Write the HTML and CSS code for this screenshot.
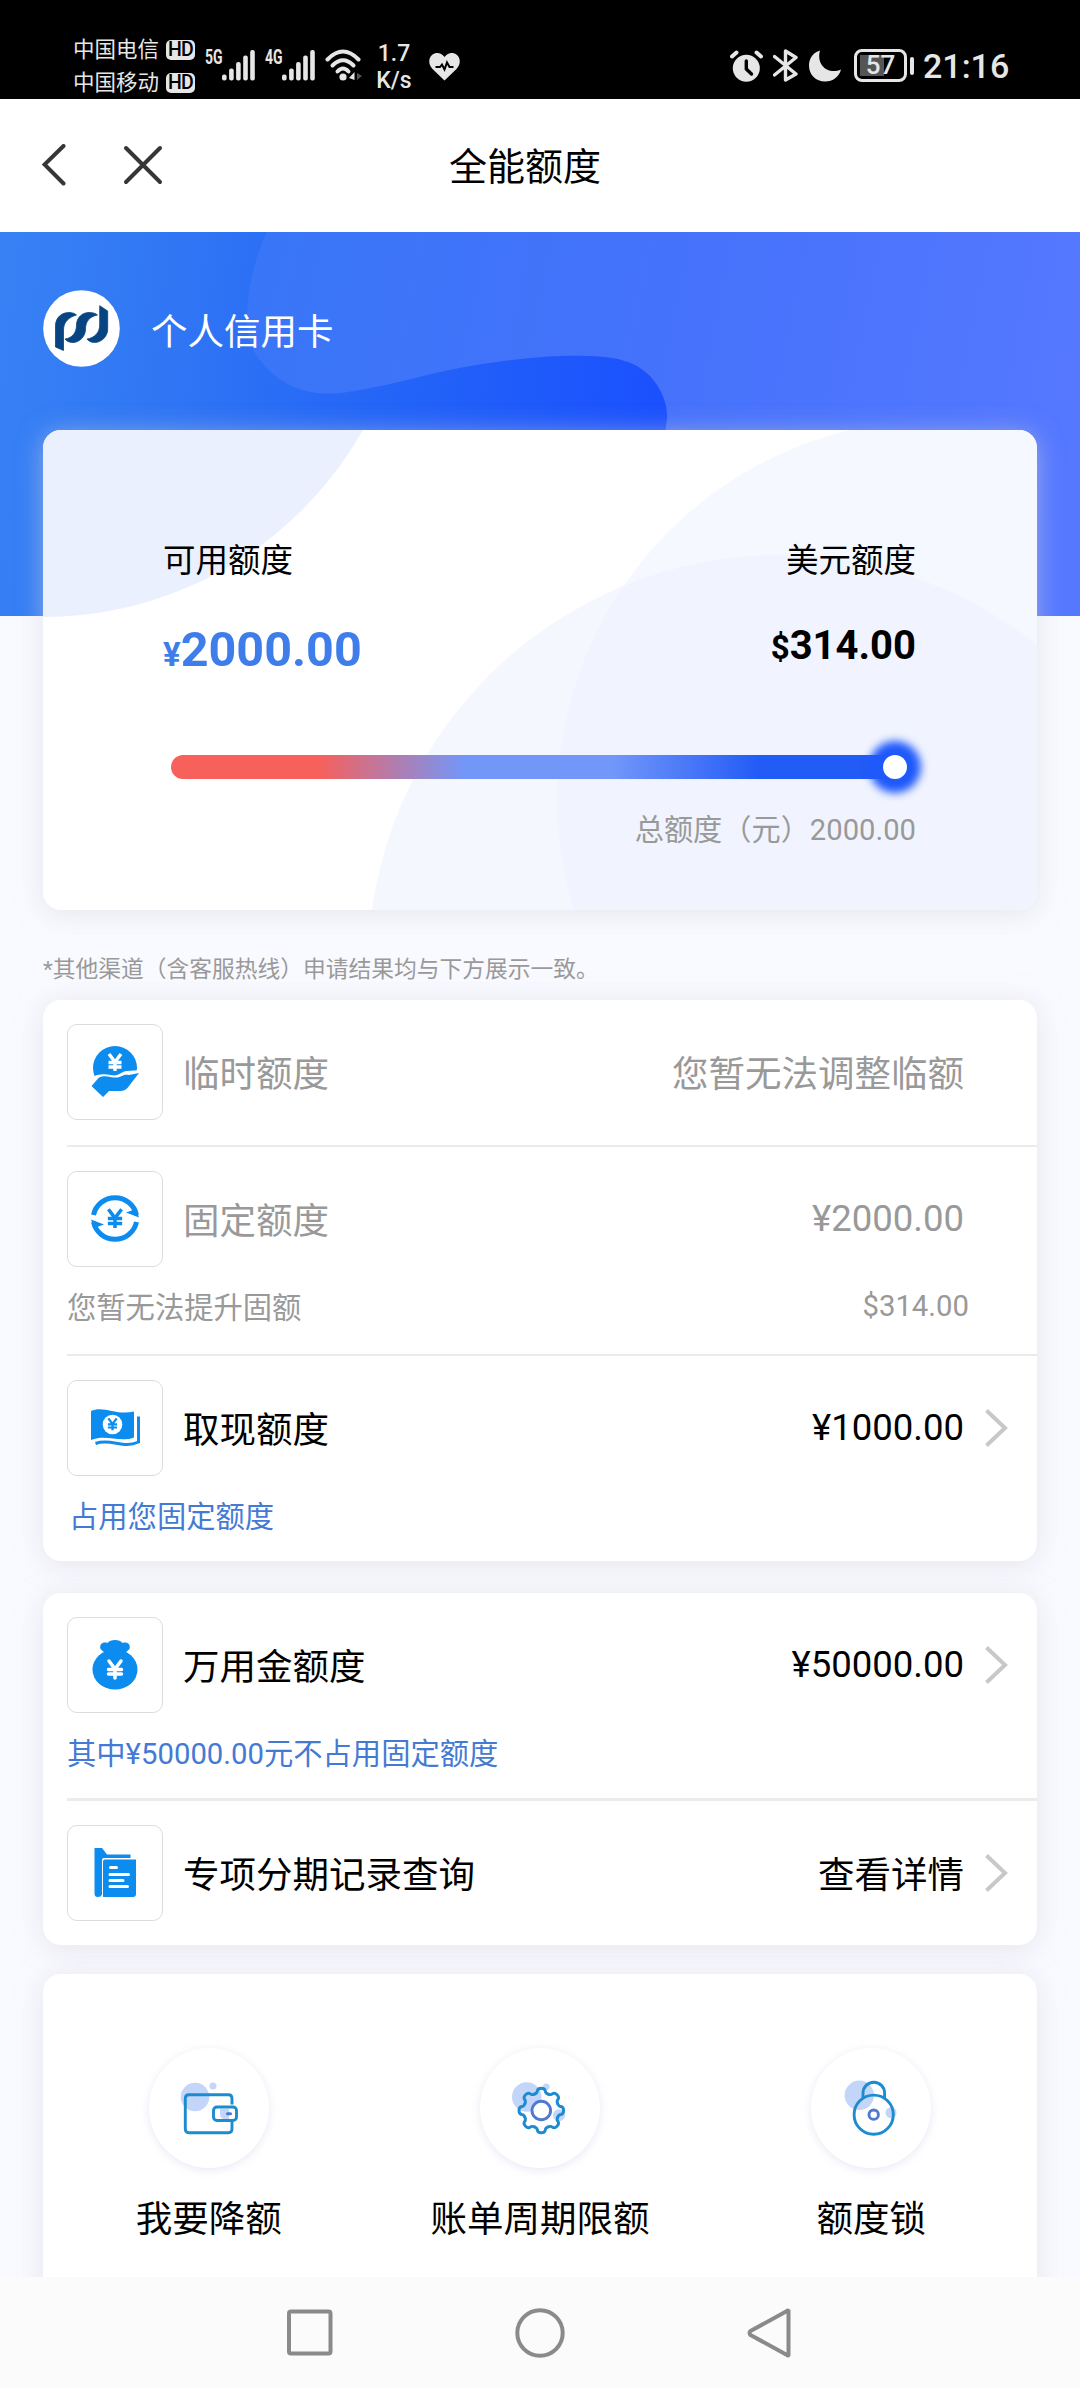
FILE: index.html
```html
<!DOCTYPE html>
<html lang="zh-CN">
<head>
<meta charset="utf-8">
<title>全能额度</title>
<link rel="stylesheet" href="styles.css">
</head>
<body>
<svg class="defs" width="0" height="0" aria-hidden="true">
  <defs>
    <g id="bars">
      <rect x="0" y="24.5" width="4.6" height="6" rx="2"/>
      <rect x="7.1" y="18.5" width="4.6" height="12" rx="2"/>
      <rect x="14.1" y="12" width="4.6" height="18.5" rx="2"/>
      <rect x="21.2" y="5.5" width="4.6" height="25" rx="2"/>
      <rect x="28.2" y="0" width="4.6" height="30.5" rx="2"/>
    </g>
    <path id="yen" d="M-6-8 L0 0 L6-8 M0 0 V9 M-6.5 0.5 H6.5 M-6.5 5 H6.5"/>
    <path id="tooth" d="M-6.8-16.4C-4.9-17.2-3.9-18-4-19.5Q-3.6-22.3 0-22.3Q3.6-22.3 4-19.5C3.9-18 4.9-17.2 6.8-16.4"/>
  </defs>
</svg>

<header class="status">
  <div class="carriers">
    <div class="carrier"><span>中国电信</span><b class="hd">HD</b></div>
    <div class="carrier"><span>中国移动</span><b class="hd">HD</b></div>
  </div>
  <div class="signal signal-5g"><span class="net">5G</span><svg width="33" height="31"><use href="#bars"/></svg></div>
  <div class="signal signal-4g"><span class="net">4G</span><svg width="33" height="31"><use href="#bars"/></svg></div>
  <svg class="wifi" width="38" height="33" viewBox="0 0 38 33">
    <g fill="none" stroke="#e6e6e6" stroke-width="4" stroke-linecap="round">
      <path d="M2.500 10.500Q18 -5.500 33.500 10.500"/><path d="M7.500 16.500Q18 6 28.500 16.500"/><path d="M12.500 22.500Q18 16.500 23.500 22.500"/>
    </g>
    <circle cx="18" cy="28" r="3.600" fill="#e6e6e6"/>
    <path d="M24 29L29.500 23V31" fill="#e6e6e6"/><path d="M32 24V31L37 27Z" fill="#555"/>
  </svg>
  <div class="speed"><span>1.7</span><span>K/s</span></div>
  <svg class="heart" width="31" height="28" viewBox="0 0 31 28">
    <path d="M15.500 27.500L3.500 16C-1 11-0.500 5 3 2C7-1 12-.5 15.500 4C19-.5 24-1 28 2C31.500 5 32 11 27.500 16Z" fill="#e6e6e6"/>
    <path d="M6.500 14H11L13 11.500L15.500 16.500L18 9.500L20.500 14H24.500" fill="none" stroke="#000" stroke-width="2"/>
  </svg>
  <svg class="alarm" width="33" height="32" viewBox="0 0 33 32">
    <circle cx="16.300" cy="18.300" r="13.500" fill="#e6e6e6"/>
    <path d="M2 6.500L6.500 2.500M31 6.500L26.500 2.500" stroke="#e6e6e6" stroke-width="4" stroke-linecap="round"/>
    <path d="M16.300 11V19L21.500 24" fill="none" stroke="#000" stroke-width="3.400" stroke-linecap="round" stroke-linejoin="round"/>
  </svg>
  <svg class="bluetooth" width="25" height="33" viewBox="0 0 25 33">
    <path d="M1.500 7.500L23 25L12.500 31V2L23 8.500L1.500 26" fill="none" stroke="#e6e6e6" stroke-width="3.400" stroke-linejoin="round" stroke-linecap="round"/>
  </svg>
  <svg class="moon" width="33" height="32" viewBox="0 0 33 32">
    <path d="M11 .5C2 3 0 11 0 15.500C0 25 7 31.500 16 31.500C24 31.500 30 27 32 19.500C19 25 7 15 11 .5Z" fill="#e6e6e6"/>
  </svg>
  <div class="battery"><span class="level">57</span></div>
  <i class="battery-nub"></i>
  <time class="clock">21:16</time>
</header>

<nav class="titlebar">
  <svg width="24" height="42" viewBox="0 0 24 42"><path d="M21.500 2L2.500 20.500L21.500 39.500" fill="none" stroke="#363636" stroke-width="4" stroke-linecap="round"/></svg>
  <svg width="40" height="40" viewBox="0 0 40 40"><path d="M3 3L37 37M37 3L3 37" fill="none" stroke="#363636" stroke-width="4" stroke-linecap="round"/></svg>
  <h1>全能额度</h1>
</nav>

<main class="page">
  <svg class="banner" width="1080" height="384" viewBox="0 0 1080 384">
    <defs>
      <linearGradient id="deep" gradientUnits="userSpaceOnUse" x1="0" y1="120" x2="665" y2="200">
        <stop offset="0" stop-color="#3781f5"/><stop offset=".25" stop-color="#3076f4"/><stop offset=".55" stop-color="#2566f7"/><stop offset="1" stop-color="#1a50fe"/>
      </linearGradient>
      <linearGradient id="light" gradientUnits="userSpaceOnUse" x1="240" y1="0" x2="1080" y2="170">
        <stop offset="0" stop-color="#3876f7"/><stop offset=".5" stop-color="#4572fb"/><stop offset="1" stop-color="#5578ff"/>
      </linearGradient>
    </defs>
    <rect width="1080" height="384" fill="url(#deep)"/>
    <path d="M267 0C252 30 246 70 247 95C249 112 254 122 264 133C287 159 316 165 348 160C395 153 435 139 482 132C530 125 560 123 590 124C618 125 636 130 650 144C663 158 668 175 667 187C665 204 661 214 655 240V384H1080V0Z" fill="url(#light)"/>
  </svg>

  <div class="owner">
    <svg width="77" height="77" viewBox="0 0 77 77">
      <circle cx="38.500" cy="38.500" r="38.300" fill="#fff"/>
      <g fill="#074482" stroke="#074482" stroke-width=".8" stroke-linejoin="round">
        <path d="M12.500 57V36C12.500 27 19 22.500 26 22.500C29 22.500 32 23.500 33.500 25C26 27 20.500 32 20.500 40V60.500Z"/>
        <path d="M33.500 35C33.500 27 40 22.500 46 22.500C50 22.500 53 23.500 54.500 25C47 26.500 42.500 31 42.500 39C42.500 47 36 52.500 30 52.500C26 52.500 23.500 51 22 49C29 48 33.500 43 33.500 35Z"/>
        <path d="M64.700 21V39C64.700 47 58 52.500 51.500 52.500C48 52.500 45.500 51 44 49C51 48 56.700 43 56.700 35V15.700Z"/>
      </g>
    </svg>
    <span>个人信用卡</span>
  </div>

  <section class="card summary">
    <svg class="summary-bg" width="994" height="480" viewBox="43 430 994 480">
      <circle cx="43" cy="250" r="367" fill="#eaf0fe"/>
      <circle cx="937.500" cy="800" r="380" fill="#f5f8fe"/>
      <circle cx="780" cy="967" r="412" fill="#ecf1fe" fill-opacity=".55"/>
    </svg>
    <div class="figures">
      <div class="figure">
        <div class="caption">可用额度</div>
        <div class="money money-cny"><small>¥</small>2000.00</div>
      </div>
      <div class="figure figure-right">
        <div class="caption">美元额度</div>
        <div class="money money-usd"><small>$</small>314.00</div>
      </div>
    </div>
    <div class="slider"><i class="knob"></i></div>
    <div class="total">总额度（元）2000.00</div>
  </section>

  <p class="tip">*其他渠道（含客服热线）申请结果均与下方展示一致。</p>

  <section class="card list">
    <div class="item muted">
      <div class="row">
        <span class="icon"><svg width="94" height="94" viewBox="1 1 94 94">
          <circle cx="48" cy="44" r="22" fill="#0c8cef"/>
          <path d="M23 54C32 49 38 50 44 51C52 53 54 47 60 47L74 46V80H23Z" fill="#fff"/>
          <path d="M24.500 62L32 53.500C38 50.500 43 53.500 49 53.500C54 53.500 56 49.500 62 51L72 49L62 62Q59 67 53 67H42L36 73Z" fill="#0c8cef"/>
          <use href="#yen" transform="translate(48 38)" fill="none" stroke="#fff" stroke-width="3.400"/>
        </svg></span>
        <span class="name">临时额度</span><span class="value value-text">您暂无法调整临额</span>
      </div>
    </div>
    <div class="item muted">
      <div class="row">
        <span class="icon"><svg width="94" height="94" viewBox="1 1 94 94">
          <g fill="none" stroke="#0c8cef" stroke-width="5"><path d="M26.500 44A22 22 0 0 1 69.500 44"/><path d="M69.500 51A22 22 0 0 1 26.500 51"/></g>
          <path d="M59 41.500L72 46.500L69 38ZM37 53.500L24 48.500L27 57Z" fill="#0c8cef"/>
          <use href="#yen" transform="translate(48 47) scale(1.100)" fill="none" stroke="#0c8cef" stroke-width="3.200"/>
        </svg></span>
        <span class="name">固定额度</span><span class="value">¥2000.00</span>
      </div>
      <div class="note"><span>您暂无法提升固额</span><span class="note-value">$314.00</span></div>
    </div>
    <div class="item item-last">
      <div class="row">
        <span class="icon"><svg width="94" height="94" viewBox="1 1 94 94">
          <path d="M24 31C36 25 50 36 67 31.500V57.500C52 63 40 54 24 60Z" fill="#0c8cef"/>
          <path d="M70 38H71.500V62C56 69 44 58 28.500 63.500" fill="none" stroke="#0c8cef" stroke-width="3"/>
          <circle cx="45.500" cy="44.500" r="9.800" fill="#fff"/>
          <use href="#yen" transform="translate(45.500 44) scale(.7)" fill="none" stroke="#0c8cef" stroke-width="3.200"/>
        </svg></span>
        <span class="name">取现额度</span><span class="value">¥1000.00</span>
        <svg class="chevron" width="24" height="40" viewBox="0 0 24 40"><path d="M2.500 2.500L21 20L2.500 37.500" fill="none" stroke="#c8c8c8" stroke-width="4"/></svg>
      </div>
      <div class="note note-blue note-indent"><span>占用您固定额度</span></div>
    </div>
  </section>

  <section class="card list list-wide">
    <div class="item item-last">
      <div class="row">
        <span class="icon"><svg width="94" height="94" viewBox="1 1 94 94">
          <ellipse cx="48" cy="52.500" rx="22.500" ry="20" fill="#0c8cef"/>
          <path d="M39 37L33.500 32C32 27 36 24.500 40.500 26C43 22 53 22 55.500 26C60 24.500 64 27 62.500 32L57 37Z" fill="#0c8cef"/>
          <use href="#yen" transform="translate(48 52)" fill="none" stroke="#fff" stroke-width="3.500" stroke-linecap="round"/>
        </svg></span>
        <span class="name">万用金额度</span><span class="value">¥50000.00</span>
        <svg class="chevron" width="24" height="40" viewBox="0 0 24 40"><path d="M2.500 2.500L21 20L2.500 37.500" fill="none" stroke="#c8c8c8" stroke-width="4"/></svg>
      </div>
      <div class="note note-blue"><span>其中¥50000.00元不占用固定额度</span></div>
    </div>
    <div class="item">
      <div class="row">
        <span class="icon"><svg width="94" height="94" viewBox="1 1 94 94">
          <path d="M27.500 23H35L40 29.500H63.500V33H37Q35 33 35 35V69.500Q34 72 31 72Q27.500 72 27.500 68.500Z" fill="#0c8cef"/>
          <path d="M38 34.500H69V69Q69 72 66 72H36V36.500Q36 34.500 38 34.500Z" fill="#0c8cef"/>
          <path d="M43.500 42.500H49.500M43 49.500H61.500M43 55.500H56M43 61.500H60.500" stroke="#fff" stroke-width="3" stroke-linecap="round"/>
        </svg></span>
        <span class="name">专项分期记录查询</span><span class="value value-text">查看详情</span>
        <svg class="chevron" width="24" height="40" viewBox="0 0 24 40"><path d="M2.500 2.500L21 20L2.500 37.500" fill="none" stroke="#c8c8c8" stroke-width="4"/></svg>
      </div>
    </div>
  </section>

  <section class="card tools">
    <div class="tool">
      <svg class="disc" width="120" height="120" viewBox="0 0 120 120">
        <circle cx="46" cy="49" r="14.300" fill="#c3d5f8"/><circle cx="64" cy="38" r="3.500" fill="#c3d5f8"/>
        <g fill="none" stroke="#1c8bd0" stroke-width="2.900">
          <path d="M83 56.500V50.500Q83 46.800 79.500 46.800H40Q36.300 46.800 36.300 50.500V81Q36.300 84.700 40 84.700H79.500Q83 84.700 83 81V74"/>
          <rect x="64.500" y="59" width="23" height="13.500" rx="3.500" fill="#fff"/>
        </g>
        <path d="M71 61H80V71H74Q71 69 71 66Z" fill="#c3d5f8"/><rect x="77" y="64.300" width="6" height="3" rx="1.500" fill="#4e78cf"/>
      </svg>
      <span>我要降额</span>
    </div>
    <div class="tool">
      <svg class="disc" width="120" height="120" viewBox="0 0 120 120">
        <g fill="#c3d5f8"><circle cx="46.700" cy="49" r="14.700"/><circle cx="66.300" cy="38.700" r="3.300"/><circle cx="79" cy="67.300" r="6"/></g>
        <g transform="translate(61.300 62.500)" fill="none" stroke="#1c8bd0" stroke-width="2.900" stroke-linecap="round">
          <use href="#tooth"/><use href="#tooth" transform="rotate(45)"/><use href="#tooth" transform="rotate(90)"/><use href="#tooth" transform="rotate(135)"/>
          <use href="#tooth" transform="rotate(180)"/><use href="#tooth" transform="rotate(225)"/><use href="#tooth" transform="rotate(270)"/><use href="#tooth" transform="rotate(315)"/>
          <circle r="9.300" fill="#fff" stroke="#5079cf"/>
        </g>
      </svg>
      <span>账单周期限额</span>
    </div>
    <div class="tool">
      <svg class="disc" width="120" height="120" viewBox="0 0 120 120">
        <g fill="#c3d5f8"><circle cx="48.300" cy="47.300" r="14.700"/><circle cx="80" cy="64.700" r="5.500"/></g>
        <g fill="none" stroke="#1c8bd0" stroke-width="2.900">
          <path d="M52 50V45A10.800 10.800 0 0 1 73.600 45V50"/><circle cx="62.700" cy="66.700" r="19.600"/>
          <circle cx="62.700" cy="66.700" r="4.700" stroke="#5079cf"/>
        </g>
      </svg>
      <span>额度锁</span>
    </div>
  </section>
</main>

<footer class="sysnav">
  <svg width="46" height="52" viewBox="0 0 46 52"><rect x="2" y="4.500" width="41.500" height="42" rx="2" fill="none" stroke="#8a8a8a" stroke-width="4"/></svg>
  <svg width="52" height="52" viewBox="0 0 52 52"><circle cx="26" cy="26" r="22.700" fill="none" stroke="#8a8a8a" stroke-width="4"/></svg>
  <svg width="46" height="52" viewBox="0 0 46 52"><path d="M41.500 4V48Q41 49 40 48L3.500 28Q1.500 26 3.500 24L40 4Q41 3 41.500 4Z" fill="none" stroke="#8a8a8a" stroke-width="4" stroke-linejoin="round"/></svg>
</footer>
</body>
</html>
```

FILE: styles.css
```css
* { box-sizing: border-box; }
body {
  margin: 0;
  width: 1080px;
  height: 2388px;
  overflow: hidden;
  display: flex;
  flex-direction: column;
  background: #f9faff;
  color: #000;
  font-family: Roboto, "Noto Sans CJK SC", sans-serif;
}
svg { display: block; flex: none; }
.defs { position: absolute; }

/* system status bar */
.status {
  flex: none;
  display: flex;
  align-items: flex-start;
  height: 99px;
  padding-left: 73px;
  background: #000;
  color: #e6e6e6;
}
.carriers { width: 122px; padding-top: 33px; }
.carrier { display: flex; align-items: center; justify-content: space-between; height: 33px; font-size: 21.5px; line-height: 33px; white-space: nowrap; }
.hd { width: 29px; height: 20px; border-radius: 5px; background: #e6e6e6; color: #000; font-size: 19.5px; font-weight: 500; line-height: 20px; text-align: center; letter-spacing: -.8px; }
.signal { display: flex; align-items: flex-start; padding-top: 50px; fill: #e6e6e6; }
.signal-5g { margin-left: 10px; }
.signal-4g { margin-left: 10px; }
.net { width: 17px; font: bold 20px/15px Roboto, sans-serif; transform: scaleX(.7); transform-origin: left; }
.wifi { margin: 49px 0 0 10px; }
.speed { width: 40px; margin-left: 11px; padding-top: 40px; display: flex; flex-direction: column; text-align: center; font-size: 23px; line-height: 27px; font-weight: 500; }
.heart { margin: 53px 0 0 15px; }
.alarm { margin: 50px 0 0 270px; }
.bluetooth { margin: 49px 0 0 10px; }
.moon { margin: 50px 0 0 11px; }
.battery { width: 53px; height: 33px; margin: 49px 0 0 12px; padding: 3px 0; border: 3px solid #e6e6e6; border-radius: 8px; background: linear-gradient(#555, #555) 3px 3px / 24px 21px no-repeat; }
.level { display: block; font-size: 26px; line-height: 21px; font-weight: 500; text-align: center; }
.battery-nub { width: 4px; height: 18px; margin: 57px 0 0 3px; border-radius: 2px; background: #e6e6e6; }
.clock { margin: 46px 0 0 9px; font-size: 34px; line-height: 40px; font-weight: 500; }

/* title bar */
.titlebar { flex: none; display: flex; align-items: center; height: 133px; padding: 0 0 2px 42px; background: #fff; }
.titlebar svg + svg { margin-left: 57px; }
.titlebar h1 { margin: 5px 0 0 286px; font-size: 38px; line-height: 56px; font-weight: 400; }

/* content */
.page { position: relative; flex: none; height: 2045px; overflow: hidden; padding: 58px 43px 0; }
.banner { position: absolute; left: 0; top: 0; }
.owner { position: relative; display: flex; align-items: center; gap: 31px; height: 77px; color: #fff; font-size: 36.5px; }
.owner span { padding-top: 1px; }
.card { position: relative; border-radius: 18px; background: #fff; box-shadow: 0 3px 26px rgba(214, 214, 218, .55); }
.summary { height: 480px; margin-top: 63px; padding: 107px 121px 0 120px; }
.summary-bg { position: absolute; left: 0; top: 0; border-radius: 18px; }
.figures { position: relative; display: flex; justify-content: space-between; height: 218px; }
.figure-right { text-align: right; }
.caption { font-size: 32.5px; line-height: 48px; }
.money { font-weight: 700; }
.money-cny { margin-top: 37px; color: #3f7eea; font-size: 48.5px; line-height: 56px; }
.money-cny small { font-size: 33px; }
.money-usd { margin-top: 33px; font-size: 40px; line-height: 56px; }
.money-usd small { font-size: 33px; }
.slider {
  position: relative;
  display: flex;
  justify-content: flex-end;
  width: 736px;
  height: 24px;
  margin-left: 8px;
  border-radius: 12px;
  background: linear-gradient(90deg, #f7605b 20%, #7297f9 40%, #7297f9 60%, #225bf6 80%);
}
.knob { width: 24px; height: 24px; border-radius: 50%; background: #fff; box-shadow: 0 0 9px 14px #1f59fb; }
.total { position: relative; margin-top: 29px; text-align: right; font-size: 29.2px; line-height: 44px; color: #999; }
.tip { margin: 43px 0 0; height: 47px; font-size: 22.75px; line-height: 34px; color: #999; white-space: nowrap; }

.list { margin-bottom: 32px; }
.item { margin-left: 24px; padding: 24px 0; }
.item:first-child { padding-bottom: 25px; }
.item + .item { border-top: 2px solid #ebebeb; }
.list .item-last { padding-bottom: 22px; }
.list-wide .item + .item { border-top-width: 3px; }
.row { display: flex; align-items: center; height: 96px; }
.icon { width: 96px; height: 96px; border: 1px solid #dcdcdc; border-radius: 10px; }
.name { margin-left: 20px; padding-top: 6px; font-size: 36.5px; line-height: 54px; }
.value { flex: 1; margin-right: 73px; text-align: right; font-size: 36.5px; line-height: 54px; }
.value:not(:last-child) { margin-right: 20px; }
.value-text { padding-top: 6px; }
.chevron { margin-right: 29px; }
.note { display: flex; justify-content: space-between; height: 44px; margin-top: 19px; font-size: 29.3px; line-height: 44px; }
.note-value { margin: -2px 68px 0 0; }
.note-blue { color: #457ad4; }
.note-indent { padding-left: 2px; }
.muted { color: #999; }

.tools { display: grid; grid-template-columns: repeat(3, 1fr); height: 340px; margin-top: -3px; padding-top: 74px; }
.tool { display: flex; flex-direction: column; align-items: center; font-size: 36.5px; line-height: 54px; }
.tool span { margin-top: 25px; white-space: nowrap; }
.disc { border-radius: 50%; background: #fff; box-shadow: 0 2px 8px rgba(190, 190, 230, .35); }

/* system navigation */
.sysnav { flex: none; position: relative; display: flex; justify-content: center; gap: 181px; height: 112px; padding: 30px 1px 0 0; background: #fbfbfb; }
```
